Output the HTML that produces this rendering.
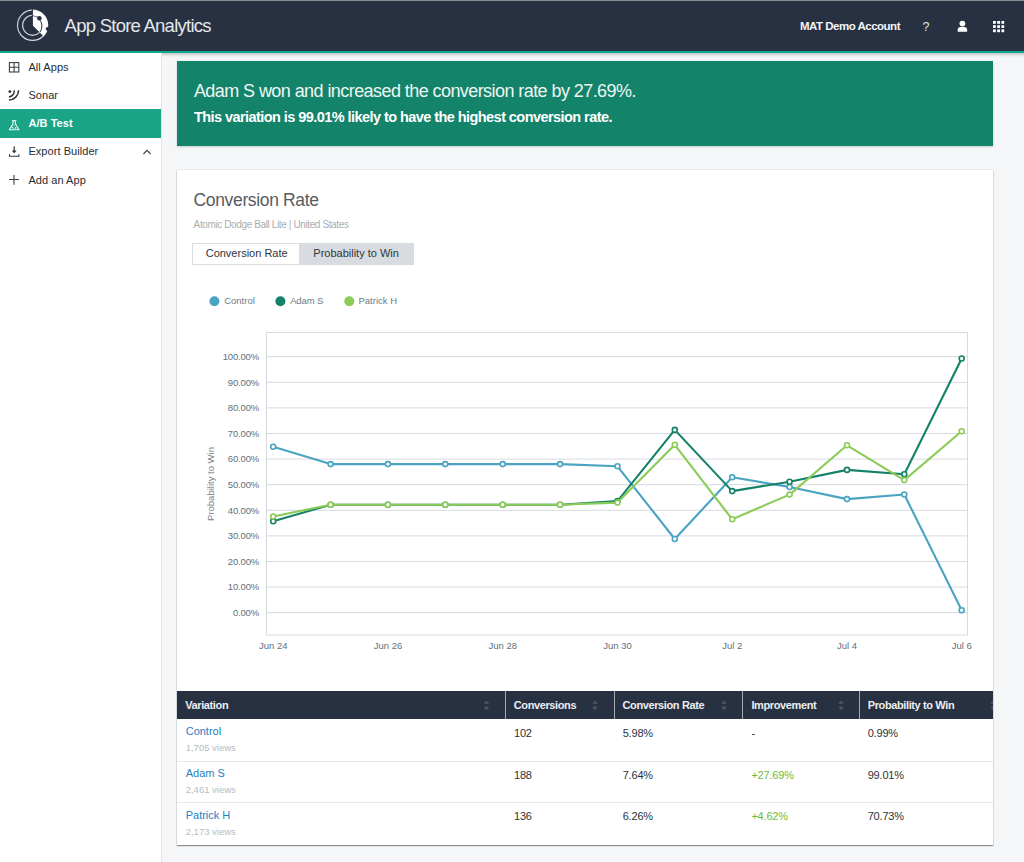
<!DOCTYPE html>
<html><head><meta charset="utf-8">
<style>
*{margin:0;padding:0;box-sizing:border-box}
html,body{width:1024px;height:862px;overflow:hidden;background:#f4f6f7;font-family:"Liberation Sans",sans-serif}
.a{position:absolute;white-space:nowrap}
#topline{position:absolute;left:0;top:0;width:1024px;height:1px;background:#8a8d91}
#hdr{position:absolute;left:0;top:1px;width:1024px;height:50px;background:#283142}
#hline{position:absolute;left:0;top:51px;width:1024px;height:2px;background:#13a789}
#hshadow{position:absolute;left:162px;top:53px;width:862px;height:4px;background:linear-gradient(rgba(60,60,60,0.25),rgba(60,60,60,0))}
#side{position:absolute;left:0;top:53px;width:162px;height:809px;background:#fff;border-right:1px solid #e3e6e9}
.si{position:absolute;left:28.4px;font-size:11px;line-height:11px;color:#272c33;letter-spacing:0.06px}
#active{position:absolute;left:0;top:109.3px;width:161px;height:28.4px;background:#19a586}
#banner{position:absolute;left:177px;top:61px;width:816px;height:84.6px;background:#13836a;box-shadow:0 1px 2px rgba(30,40,70,0.2)}
#card{position:absolute;left:177px;top:170px;width:816px;height:675px;background:#fff;box-shadow:0 1px 1px rgba(40,50,60,0.5),0 0 1px rgba(0,0,0,0.25)}
.th{position:absolute;top:691.4px;height:27.7px;background:#283142}
.sep{position:absolute;top:691.4px;width:1px;height:27.7px;background:#a3a9b1}
.hd{font-size:11px;line-height:11px;font-weight:bold;color:#eceef1;letter-spacing:-0.38px}
.rl{position:absolute;left:177px;width:816px;height:1px;background:#e6e8ea}
.tv{font-size:11px;line-height:11px;color:#2c3238;letter-spacing:-0.2px}
.nm{font-size:11px;line-height:11px;color:#1f80c4}
.vw{font-size:9.5px;line-height:9.5px;color:#b7bcc1}
</style></head><body>
<div id="topline"></div>
<div id="hdr"></div>
<div id="hline"></div>

<!-- logo -->
<svg class="a" style="left:0;top:0" width="60" height="52" viewBox="0 0 60 52">
  <circle cx="32.6" cy="25.3" r="15.1" fill="none" stroke="#d3d6db" stroke-width="1.15"/>
  <circle cx="32.6" cy="25.3" r="10.0" fill="none" stroke="#d3d6db" stroke-width="1.15"/>
  <path d="M32.6 25.3 L32.6 9.9 A15.4 15.4 0 0 1 43.5 36.2 Z" fill="#fff"/>
  <rect x="31.8" y="9" width="1" height="17" fill="#283142"/>
  <path d="M32.8 15.6 L38 17.3" stroke="#283142" stroke-width="0.7" fill="none"/>
  <path d="M39.5 19.5 A10 10 0 0 1 39.8 32.3" stroke="#283142" stroke-width="1" fill="none"/>
  <circle cx="39.35" cy="18.2" r="2.3" fill="#283142"/>
  <circle cx="47.6" cy="28.8" r="1.9" fill="#283142"/>
</svg>
<div class="a" style="left:64.6px;top:16.5px;font-size:18.5px;line-height:18.5px;color:#e4e7eb;letter-spacing:-0.75px">App Store Analytics</div>
<div class="a" style="left:800px;top:20.8px;font-size:11.5px;line-height:11.5px;color:#f4f5f7;font-weight:bold;letter-spacing:-0.5px">MAT Demo Account</div>
<div class="a" style="left:922.5px;top:20.6px;font-size:12.5px;line-height:12.5px;color:#e2e5e9;font-weight:normal">?</div>
<svg class="a" style="left:955px;top:18px" width="16" height="16" viewBox="0 0 16 16">
  <circle cx="7.4" cy="5.6" r="2.85" fill="#fff"/>
  <path d="M2.7 13.7 L2.7 11.6 Q2.7 9.1 5.2 9.0 L9.6 9.0 Q12.1 9.1 12.1 11.6 L12.1 13.7 Z" fill="#fff"/>
</svg>
<svg class="a" style="left:992px;top:19.6px" width="14" height="14" viewBox="0 0 14 14">
  <g fill="#fff">
  <rect x="1" y="1" width="2.8" height="2.8"/><rect x="5.2" y="1" width="2.8" height="2.8"/><rect x="9.4" y="1" width="2.8" height="2.8"/>
  <rect x="1" y="5.2" width="2.8" height="2.8"/><rect x="5.2" y="5.2" width="2.8" height="2.8"/><rect x="9.4" y="5.2" width="2.8" height="2.8"/>
  <rect x="1" y="9.4" width="2.8" height="2.8"/><rect x="5.2" y="9.4" width="2.8" height="2.8"/><rect x="9.4" y="9.4" width="2.8" height="2.8"/>
  </g>
</svg>

<!-- sidebar -->
<div id="side"></div>
<div id="active"></div>
<svg class="a" style="left:0;top:53px" width="30" height="140" viewBox="0 53 30 140">
  <g fill="none" stroke="#3a3f47" stroke-width="1.1">
    <rect x="9.4" y="62.6" width="9.4" height="9.4"/>
    <path d="M14.1 62.6 V72 M9.4 67.3 H18.8"/>
  </g>
  <g fill="none" stroke="#2f343b" stroke-width="1.5">
    <path d="M14.2 90.3 A6 6 0 0 1 8.9 97"/>
    <path d="M18.6 90.2 A10 10 0 0 1 8.9 100.1"/>
  </g>
  <circle cx="9.9" cy="91.6" r="1.45" fill="#2f343b"/>
  <g fill="none" stroke="#eef8f5" stroke-width="1.1" stroke-linejoin="round">
    <path d="M12 120.7 H16.3"/>
    <path d="M13 121 V123.8 L9.4 129.8 H19 L15.3 123.8 V121"/>
  </g>
  <g fill="#eef8f5"><circle cx="12.3" cy="127.5" r="0.8"/><circle cx="15.6" cy="127.9" r="0.8"/><circle cx="14" cy="125.6" r="0.6"/><circle cx="13.6" cy="128.6" r="0.5"/></g>
  <g fill="#2f343b">
    <rect x="13.6" y="146.4" width="1.2" height="5"/>
    <path d="M11.8 150.4 H16.6 L14.2 153.4 Z"/>
  </g>
  <path d="M9.5 154.3 V156.2 H18.9 V154.3" stroke="#2f343b" stroke-width="1.1" fill="none"/>
  <path d="M14 174.9 V184.8 M9 179.5 H18.9" stroke="#3a3f47" stroke-width="1.1" fill="none"/>
</svg>
<div class="a si" style="top:62px">All Apps</div>
<div class="a si" style="top:90px">Sonar</div>
<div class="a si" style="top:117.7px;color:#fff;font-weight:bold">A/B Test</div>
<div class="a si" style="top:146.2px">Export Builder</div>
<div class="a si" style="top:174.5px">Add an App</div>
<svg class="a" style="left:138px;top:146px" width="16" height="12" viewBox="138 146 16 12">
  <path d="M143.4 154 L147 150.3 L150.6 154" stroke="#3a3f47" stroke-width="1.1" fill="none"/>
</svg>

<div id="hshadow"></div>

<!-- banner -->
<div id="banner"></div>
<div class="a" style="left:193.9px;top:82px;font-size:18px;line-height:18px;color:#eef6f3;letter-spacing:-0.57px">Adam S won and increased the conversion rate by 27.69%.</div>
<div class="a" style="left:193.9px;top:109.6px;font-size:14.5px;line-height:14.5px;color:#fff;font-weight:bold;letter-spacing:-0.56px">This variation is 99.01% likely to have the highest conversion rate.</div>

<!-- card -->
<div id="card"></div>
<div class="a" style="left:193.6px;top:192px;font-size:17.5px;line-height:17.5px;color:#575c63;letter-spacing:-0.36px">Conversion Rate</div>
<div class="a" style="left:193.6px;top:220.2px;font-size:10px;line-height:10px;color:#a9adb2;letter-spacing:-0.38px">Atomic Dodge Ball Lite | United States</div>
<div class="a" style="left:192px;top:243px;width:108px;height:21.5px;border:1px solid #d9dde2;background:#fff"></div>
<div class="a" style="left:299.5px;top:243px;width:114.5px;height:21.5px;background:#d8dce1"></div>
<div class="a" style="left:205.7px;top:248.4px;font-size:11px;line-height:11px;color:#2f353b">Conversion Rate</div>
<div class="a" style="left:313.3px;top:248.4px;font-size:11px;line-height:11px;color:#2f353b">Probability to Win</div>

<!-- chart -->
<svg class="a" style="left:0;top:0" width="1024" height="862" viewBox="0 0 1024 862" font-family="Liberation Sans, sans-serif">
  <g fill="#6f7a85" font-size="9.5">
    <circle cx="214.4" cy="301.3" r="5" fill="#4aa3c2"/>
    <text x="224.2" y="304.4">Control</text>
    <circle cx="280.4" cy="301.3" r="5" fill="#168169"/>
    <text x="290.2" y="304.4" letter-spacing="-0.15">Adam S</text>
    <circle cx="349.3" cy="301.3" r="5" fill="#8bcb57"/>
    <text x="358.5" y="304.4">Patrick H</text>
  </g>
  <g stroke="#d7dae1" stroke-width="1" fill="none">
    <rect x="266.5" y="332.5" width="701" height="302.5"/>
    <path d="M266.5 356.7H967.5 M266.5 382.3H967.5 M266.5 407.9H967.5 M266.5 433.5H967.5 M266.5 459.1H967.5 M266.5 484.7H967.5 M266.5 510.3H967.5 M266.5 535.9H967.5 M266.5 561.5H967.5 M266.5 587.1H967.5 M266.5 612.7H967.5"/>
  </g>
  <g fill="#63707d" font-size="9.5" text-anchor="end" letter-spacing="-0.18">
    <text x="259" y="359.9">100.00%</text>
    <text x="259" y="385.5">90.00%</text>
    <text x="259" y="411.1">80.00%</text>
    <text x="259" y="436.7">70.00%</text>
    <text x="259" y="462.3">60.00%</text>
    <text x="259" y="487.9">50.00%</text>
    <text x="259" y="513.5">40.00%</text>
    <text x="259" y="539.1">30.00%</text>
    <text x="259" y="564.7">20.00%</text>
    <text x="259" y="590.3">10.00%</text>
    <text x="259" y="615.9">0.00%</text>
  </g>
  <g fill="#63707d" font-size="9.5" text-anchor="middle">
    <text x="273.2" y="649.1">Jun 24</text>
    <text x="388" y="649.1">Jun 26</text>
    <text x="502.7" y="649.1">Jun 28</text>
    <text x="617.5" y="649.1">Jun 30</text>
    <text x="732.2" y="649.1">Jul 2</text>
    <text x="847" y="649.1">Jul 4</text>
    <text x="961.7" y="649.1">Jul 6</text>
  </g>
  <text x="0" y="0" transform="translate(213.6 484) rotate(-90)" fill="#75808b" font-size="9.5" text-anchor="middle">Probability to Win</text>
  <g id="lines" fill="none" stroke-width="2.1" stroke-linejoin="round">
<path d="M273.2 446.7 L330.6 464.1 L387.9 464.1 L445.3 464.1 L502.7 464.1 L560.1 464.1 L617.5 466.3 L674.8 539.0 L732.2 477.3 L789.6 487.0 L847.0 499.1 L904.3 494.5 L961.7 610.3" stroke="#4aa3c2"/>
<circle cx="273.2" cy="446.7" r="2.5" fill="#fff" stroke="#4aa3c2" stroke-width="1.6"/>
<circle cx="330.6" cy="464.1" r="2.5" fill="#fff" stroke="#4aa3c2" stroke-width="1.6"/>
<circle cx="387.9" cy="464.1" r="2.5" fill="#fff" stroke="#4aa3c2" stroke-width="1.6"/>
<circle cx="445.3" cy="464.1" r="2.5" fill="#fff" stroke="#4aa3c2" stroke-width="1.6"/>
<circle cx="502.7" cy="464.1" r="2.5" fill="#fff" stroke="#4aa3c2" stroke-width="1.6"/>
<circle cx="560.1" cy="464.1" r="2.5" fill="#fff" stroke="#4aa3c2" stroke-width="1.6"/>
<circle cx="617.5" cy="466.3" r="2.5" fill="#fff" stroke="#4aa3c2" stroke-width="1.6"/>
<circle cx="674.8" cy="539.0" r="2.5" fill="#fff" stroke="#4aa3c2" stroke-width="1.6"/>
<circle cx="732.2" cy="477.3" r="2.5" fill="#fff" stroke="#4aa3c2" stroke-width="1.6"/>
<circle cx="789.6" cy="487.0" r="2.5" fill="#fff" stroke="#4aa3c2" stroke-width="1.6"/>
<circle cx="847.0" cy="499.1" r="2.5" fill="#fff" stroke="#4aa3c2" stroke-width="1.6"/>
<circle cx="904.3" cy="494.5" r="2.5" fill="#fff" stroke="#4aa3c2" stroke-width="1.6"/>
<circle cx="961.7" cy="610.3" r="2.5" fill="#fff" stroke="#4aa3c2" stroke-width="1.6"/>
<path d="M273.2 521.3 L330.6 504.7 L387.9 504.7 L445.3 504.7 L502.7 504.7 L560.1 504.7 L617.5 501.1 L674.8 429.9 L732.2 491.1 L789.6 481.7 L847.0 469.9 L904.3 474.2 L961.7 358.5" stroke="#168169"/>
<circle cx="273.2" cy="521.3" r="2.5" fill="#fff" stroke="#168169" stroke-width="1.6"/>
<circle cx="330.6" cy="504.7" r="2.5" fill="#fff" stroke="#168169" stroke-width="1.6"/>
<circle cx="387.9" cy="504.7" r="2.5" fill="#fff" stroke="#168169" stroke-width="1.6"/>
<circle cx="445.3" cy="504.7" r="2.5" fill="#fff" stroke="#168169" stroke-width="1.6"/>
<circle cx="502.7" cy="504.7" r="2.5" fill="#fff" stroke="#168169" stroke-width="1.6"/>
<circle cx="560.1" cy="504.7" r="2.5" fill="#fff" stroke="#168169" stroke-width="1.6"/>
<circle cx="617.5" cy="501.1" r="2.5" fill="#fff" stroke="#168169" stroke-width="1.6"/>
<circle cx="674.8" cy="429.9" r="2.5" fill="#fff" stroke="#168169" stroke-width="1.6"/>
<circle cx="732.2" cy="491.1" r="2.5" fill="#fff" stroke="#168169" stroke-width="1.6"/>
<circle cx="789.6" cy="481.7" r="2.5" fill="#fff" stroke="#168169" stroke-width="1.6"/>
<circle cx="847.0" cy="469.9" r="2.5" fill="#fff" stroke="#168169" stroke-width="1.6"/>
<circle cx="904.3" cy="474.2" r="2.5" fill="#fff" stroke="#168169" stroke-width="1.6"/>
<circle cx="961.7" cy="358.5" r="2.5" fill="#fff" stroke="#168169" stroke-width="1.6"/>
<path d="M273.2 516.5 L330.6 504.7 L387.9 504.7 L445.3 504.7 L502.7 504.7 L560.1 504.7 L617.5 502.6 L674.8 444.8 L732.2 519.3 L789.6 494.6 L847.0 445.3 L904.3 480.1 L961.7 431.2" stroke="#8bcb57"/>
<circle cx="273.2" cy="516.5" r="2.5" fill="#fff" stroke="#8bcb57" stroke-width="1.6"/>
<circle cx="330.6" cy="504.7" r="2.5" fill="#fff" stroke="#8bcb57" stroke-width="1.6"/>
<circle cx="387.9" cy="504.7" r="2.5" fill="#fff" stroke="#8bcb57" stroke-width="1.6"/>
<circle cx="445.3" cy="504.7" r="2.5" fill="#fff" stroke="#8bcb57" stroke-width="1.6"/>
<circle cx="502.7" cy="504.7" r="2.5" fill="#fff" stroke="#8bcb57" stroke-width="1.6"/>
<circle cx="560.1" cy="504.7" r="2.5" fill="#fff" stroke="#8bcb57" stroke-width="1.6"/>
<circle cx="617.5" cy="502.6" r="2.5" fill="#fff" stroke="#8bcb57" stroke-width="1.6"/>
<circle cx="674.8" cy="444.8" r="2.5" fill="#fff" stroke="#8bcb57" stroke-width="1.6"/>
<circle cx="732.2" cy="519.3" r="2.5" fill="#fff" stroke="#8bcb57" stroke-width="1.6"/>
<circle cx="789.6" cy="494.6" r="2.5" fill="#fff" stroke="#8bcb57" stroke-width="1.6"/>
<circle cx="847.0" cy="445.3" r="2.5" fill="#fff" stroke="#8bcb57" stroke-width="1.6"/>
<circle cx="904.3" cy="480.1" r="2.5" fill="#fff" stroke="#8bcb57" stroke-width="1.6"/>
<circle cx="961.7" cy="431.2" r="2.5" fill="#fff" stroke="#8bcb57" stroke-width="1.6"/>
</g>
</svg>

<!-- table -->
<div class="th" style="left:177px;width:816px"></div>
<div class="sep" style="left:505px"></div>
<div class="sep" style="left:613.5px"></div>
<div class="sep" style="left:742px"></div>
<div class="sep" style="left:859px"></div>
<div class="a hd" style="left:185.2px;top:699.5px">Variation</div>
<div class="a hd" style="left:513.75px;top:699.5px">Conversions</div>
<div class="a hd" style="left:622.5px;top:699.5px">Conversion Rate</div>
<div class="a hd" style="left:751.4px;top:699.5px">Improvement</div>
<div class="a hd" style="left:867.7px;top:699.5px">Probability to Win</div>
<svg class="a" style="left:0;top:690px" width="1024" height="30" viewBox="0 690 1024 30">
  <g fill="#4f5767">
    <path d="M483.7 703.8 L486.5 700.4 L489.3 703.8 Z M483.7 706.8 L486.5 710.3 L489.3 706.8 Z"/>
    <path d="M592.2 703.8 L595.0 700.4 L597.8 703.8 Z M592.2 706.8 L595.0 710.3 L597.8 706.8 Z"/>
    <path d="M721.2 703.8 L724.0 700.4 L726.8 703.8 Z M721.2 706.8 L724.0 710.3 L726.8 706.8 Z"/>
    <path d="M838.2 703.8 L841.0 700.4 L843.8 703.8 Z M838.2 706.8 L841.0 710.3 L843.8 706.8 Z"/>
    <path d="M990.2 703.8 L993 700.4 L993 703.8 Z M990.2 706.8 L993 710.3 L993 706.8 Z"/>
  </g>
</svg>
<div class="rl" style="top:760.5px"></div>
<div class="rl" style="top:802px"></div>
<div class="a nm" style="left:185.7px;top:726.2px">Control</div>
<div class="a vw" style="left:185.7px;top:743.2px">1,705 views</div>
<div class="a tv" style="left:514px;top:727.7px">102</div>
<div class="a tv" style="left:622.7px;top:727.7px">5.98%</div>
<div class="a tv" style="left:751.4px;top:727.7px">-</div>
<div class="a tv" style="left:867.7px;top:727.7px">0.99%</div>
<div class="a nm" style="left:185.7px;top:767.7px">Adam S</div>
<div class="a vw" style="left:185.7px;top:784.7px">2,461 views</div>
<div class="a tv" style="left:514px;top:769.7px">188</div>
<div class="a tv" style="left:622.7px;top:769.7px">7.64%</div>
<div class="a tv" style="left:751.4px;top:769.7px;color:#6dbb3e">+27.69%</div>
<div class="a tv" style="left:867.7px;top:769.7px">99.01%</div>
<div class="a nm" style="left:185.7px;top:809.7px">Patrick H</div>
<div class="a vw" style="left:185.7px;top:826.7px">2,173 views</div>
<div class="a tv" style="left:514px;top:810.7px">136</div>
<div class="a tv" style="left:622.7px;top:810.7px">6.26%</div>
<div class="a tv" style="left:751.4px;top:810.7px;color:#6dbb3e">+4.62%</div>
<div class="a tv" style="left:867.7px;top:810.7px">70.73%</div>
</body></html>
